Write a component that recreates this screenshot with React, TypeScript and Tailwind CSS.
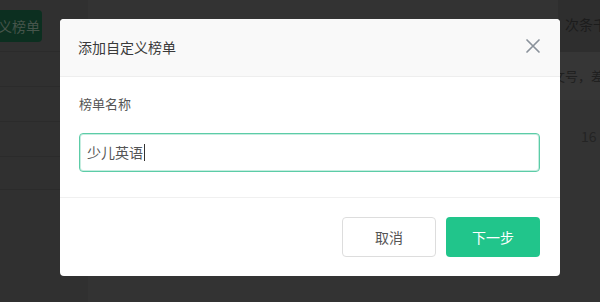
const font = { fontFamily: '"Microsoft YaHei", "Noto Sans CJK SC", "Noto Sans", sans-serif' };

const BackdropPage = () => {
    return (
        <div className="flex h-full w-full bg-[#333333]">
            <div className="w-[88px] shrink-0 bg-[#303030] flex flex-col">
                <div className="h-[52px] border-b border-[#2b2b2b] flex items-start pt-[10px]">
                    <div className="h-[32px] w-[42px] rounded-r-[4px] bg-[#0c2f20] text-[#46554b] text-[14px] leading-[32px] whitespace-nowrap overflow-hidden flex justify-end pr-[2px]">
                        义榜单
                    </div>
                </div>
                <div className="h-[35px] border-b border-[#2b2b2b]" />
                <div className="h-[35px] border-b border-[#2b2b2b]" />
                <div className="h-[35px] border-b border-[#2b2b2b]" />
                <div className="h-[33px] border-b border-[#2b2b2b]" />
            </div>
            <div className="flex-1" />
            <div className="w-[42px] shrink-0 flex flex-col overflow-hidden">
                <div className="h-[52px] bg-[#2e2e2e] pl-[7px] pt-[14px] text-[14px] text-[#1c1c1c] whitespace-nowrap">次条千</div>
                <div className="h-[48px] bg-[#363636] -ml-[6px] pt-[14px] text-[13px] text-[#202020] whitespace-nowrap">文号，差</div>
                <div className="h-[50px] pl-[23px] pt-[26px] text-[14px] text-[#242424]">16</div>
            </div>
        </div>
    );
};

const App = () => {
    return (
        <div className="relative w-[600px] h-[302px] overflow-hidden" style={font}>
            <BackdropPage />
            <div className="absolute left-[60px] top-[19px] w-[500px] rounded-[4px] bg-white overflow-hidden">
                <div className="h-[58px] bg-[#f9f9f9] border-b border-[#eeeeee] flex items-center justify-between pl-[18px] pr-[19px]">
                    <span className="text-[14px] text-[#3a3a3a] pb-[1px]">添加自定义榜单</span>
                    <svg width="16" height="16" viewBox="0 0 16 16" className="mt-[-4px]">
                        <path d="M2 2 L14 14 M14 2 L2 14" stroke="#8a929b" strokeWidth="1.7" strokeLinecap="round" />
                    </svg>
                </div>
                <div className="px-[19px] pr-[20px] pt-[17px] pb-[25px]">
                    <div className="text-[13px] leading-[20px] text-[#555]">榜单名称</div>
                    <div className="mt-[19px] h-[39px] rounded-[4px] border border-[#5ccca7] shadow-[inset_0_0_0_1px_rgba(92,204,167,0.35)] flex items-center pl-[7px]">
                        <span className="text-[14px] text-[#555]">少儿英语</span>
                        <span className="w-[1px] h-[17px] bg-[#333] ml-[1px]" />
                    </div>
                </div>
                <div className="border-t border-[#f0f0f0] flex justify-end gap-[10px] pt-[19px] pb-[19px] pr-[20px]">
                    <button className="w-[94px] h-[40px] rounded-[4px] border border-[#dddddd] bg-white text-[14px] text-[#555]">取消</button>
                    <button className="w-[94px] h-[40px] rounded-[4px] bg-[#21c58b] text-[14px] text-white">下一步</button>
                </div>
            </div>
        </div>
    );
};

export default App;
